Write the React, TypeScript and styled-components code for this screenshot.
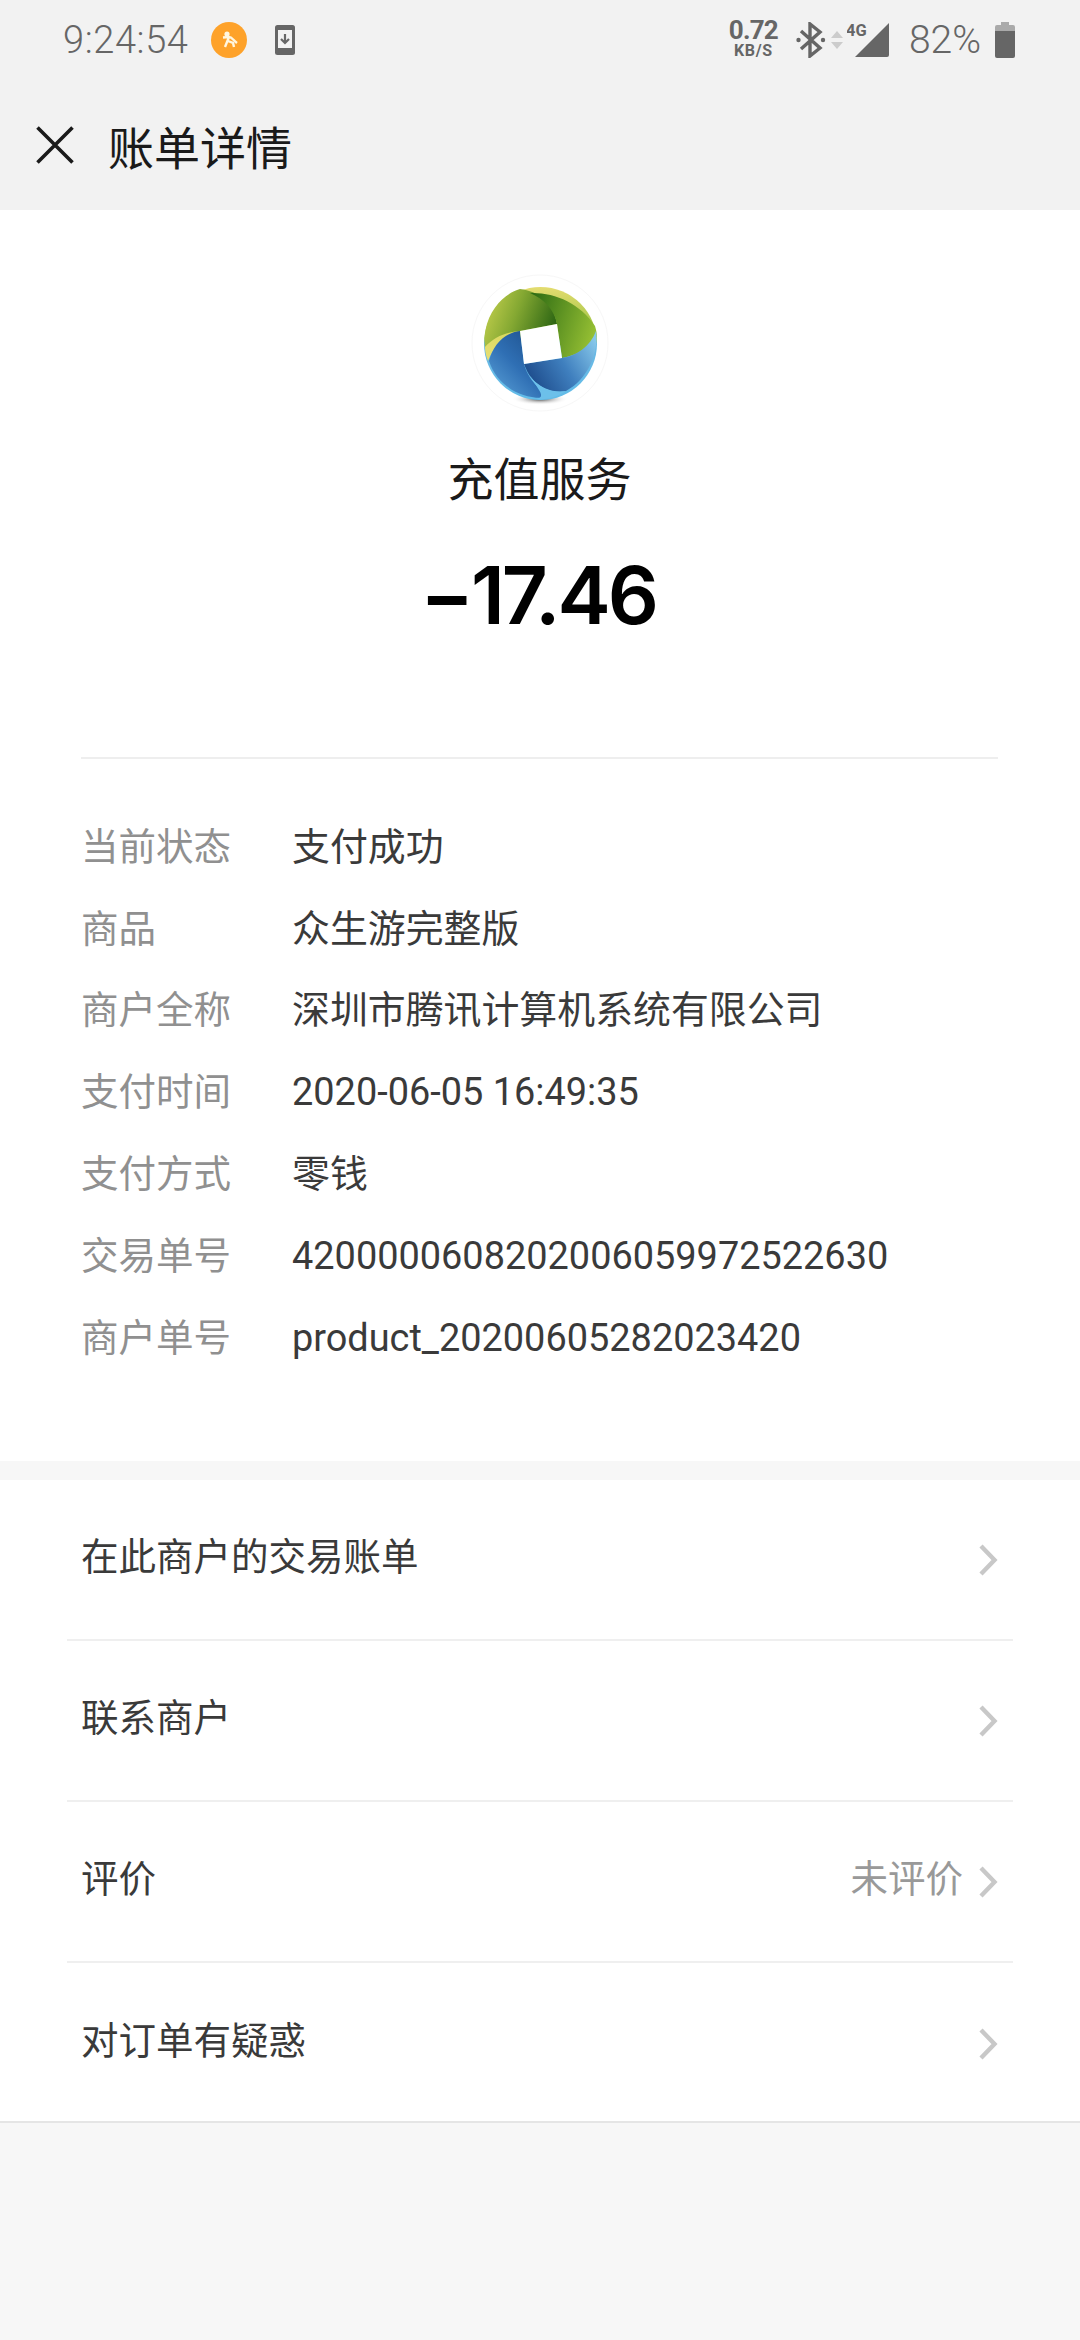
import React from "react";
import styled, { createGlobalStyle } from "styled-components";

const GlobalStyle = createGlobalStyle`
  html, body {
    margin: 0;
    padding: 0;
    background: #f7f7f7;
    font-family: Roboto, "Noto Sans CJK SC", sans-serif;
  }
`;

const Page = styled.div`
  width: 1080px;
  height: 2340px;
  display: flex;
  flex-direction: column;
  background: #f7f7f7;
  overflow: hidden;
`;

const Header = styled.header`
  height: 210px;
  flex: none;
  background: #f2f2f2;
  display: flex;
  flex-direction: column;
`;

const StatusBar = styled.div`
  height: 80px;
  display: flex;
  align-items: center;
  padding: 0 65px 0 63px;
  color: #666;
`;

const Clock = styled.span`
  font-size: 38px;
  font-weight: 300;
  letter-spacing: 0.6px;
  margin-right: 22px;
`;

const StatusLeft = styled.div`
  display: flex;
  align-items: center;
  flex: 1;
`;

const Speed = styled.div`
  display: flex;
  flex-direction: column;
  align-items: center;
  font-weight: 700;
  color: #666;
  margin-right: 18px;
  span:first-child {
    font-size: 26px;
    line-height: 22px;
    letter-spacing: -0.8px;
  }
  span:last-child {
    font-size: 16px;
    line-height: 20px;
    letter-spacing: 0.6px;
  }
`;

const BluetoothGap = styled.span`
  width: 5px;
  flex: none;
`;

const Percent = styled.span`
  font-size: 39px;
  font-weight: 300;
  margin: 0 14px 0 20px;
`;

const NavBar = styled.div`
  flex: 1;
  display: flex;
  align-items: center;
  padding: 0 0 0 36px;
  gap: 34px;
`;

const NavTitle = styled.h1`
  margin: 0;
  font-size: 46px;
  line-height: 60px;
  font-weight: 400;
  color: #1a1a1a;
  font-family: "Noto Sans CJK SC", sans-serif;
`;

const Summary = styled.section`
  background: #fff;
  flex: none;
  height: 1251px;
  display: flex;
  flex-direction: column;
  padding: 0 82px 0 81px;
  box-sizing: border-box;
`;

const Merchant = styled.div`
  height: 549px;
  flex: none;
  border-bottom: 2px solid #eeeeee;
  display: flex;
  flex-direction: column;
  align-items: center;
  box-sizing: border-box;
  padding-top: 63px;
`;

const MerchantName = styled.div`
  margin-top: 33px;
  font-size: 46px;
  line-height: 60px;
  color: #1a1a1a;
  font-family: "Noto Sans CJK SC", sans-serif;
`;

const Amount = styled.div`
  margin-top: 44px;
  margin-left: -3px;
  font-size: 80px;
  line-height: 90px;
  font-weight: 600;
  color: #000;
  font-family: Inter, Roboto, sans-serif;
  letter-spacing: -3px;
`;

const Details = styled.dl`
  margin: 44px 0 0;
  display: flex;
  flex-direction: column;
`;

const DetailRow = styled.div`
  height: 81.8px;
  display: flex;
  align-items: center;
`;

const DetailLabel = styled.dt`
  width: 211px;
  flex: none;
  font-size: 37.5px;
  line-height: 50px;
  color: #909090;
  font-family: "Noto Sans CJK SC", sans-serif;
`;

const DetailValue = styled.dd`
  margin: 0;
  padding-top: 6px;
  font-size: 37.9px;
  line-height: 50px;
  color: #3a3a3a;
  white-space: nowrap;
  font-family: Roboto, "Noto Sans CJK SC", sans-serif;
`;

const Actions = styled.section`
  margin-top: 19px;
  background: #fff;
  border-bottom: 2px solid #e5e5e5;
  padding: 0 67px;
  flex: none;
`;

const ActionRow = styled.div<{ $last?: boolean }>`
  height: ${(p) => (p.$last ? "158px" : "161px")};
  display: flex;
  align-items: center;
  box-sizing: border-box;
  padding: ${(p) => (p.$last ? "3px 15px 0 14px" : "0 15px 0 14px")};
  border-bottom: ${(p) => (p.$last ? "none" : "2px solid #efefef")};
`;

const ActionLabel = styled.span`
  flex: 1;
  font-size: 37.5px;
  color: #3a3a3a;
  margin-bottom: 12px;
  font-family: "Noto Sans CJK SC", sans-serif;
`;

const ActionNote = styled.span`
  font-size: 37.5px;
  color: #999;
  margin: 0 15px 12px 0;
  font-family: "Noto Sans CJK SC", sans-serif;
`;

const Chevron = () => (
  <svg width="20" height="32" viewBox="0 0 20 32" style={{ flex: "none" }}>
    <path d="M3 2 L16.5 16 L3 30" fill="none" stroke="#c8c8c8" strokeWidth="4.4" />
  </svg>
);

const CloseIcon = () => (
  <svg width="38" height="38" viewBox="0 0 38 38" style={{ flex: "none" }}>
    <path d="M1.5 1.5 L36.5 36.5 M36.5 1.5 L1.5 36.5" stroke="#1a1a1a" strokeWidth="3.6" fill="none" />
  </svg>
);

const RunnerBadge = () => (
  <svg width="36" height="36" viewBox="0 0 36 36" style={{ marginRight: 28, flex: "none" }}>
    <circle cx="18" cy="18" r="18" fill="#fea22a" />
    <circle cx="16" cy="12" r="2.6" fill="#fff6e0" />
    <path d="M12 15.5 L18 15 C21 15 22 18 26 21 M18 15 L14 25 M17 19 L22 21 L23 25" stroke="#fff6e0" strokeWidth="2.4" fill="none" />
  </svg>
);

const DownloadIcon = () => (
  <svg width="20" height="30" viewBox="0 0 20 30" style={{ flex: "none" }}>
    <rect width="20" height="30" rx="2.5" fill="#666" />
    <rect x="3" y="5" width="14" height="18" fill="#f2f2f2" />
    <path d="M10 9 V17 M6 14 L10 18 L14 14" stroke="#666" strokeWidth="2.2" fill="none" />
  </svg>
);

const BluetoothIcon = () => (
  <svg width="30" height="36" viewBox="0 0 30 36" style={{ flex: "none" }}>
    <path d="M5 9 L24 26 L14 34 V2 L24 10 L5 27" stroke="#666" strokeWidth="3.4" fill="none" />
    <circle cx="2.5" cy="18" r="2.2" fill="#666" />
    <circle cx="27" cy="18" r="2.2" fill="#666" />
  </svg>
);

const SignalIcon = () => (
  <svg width="42" height="36" viewBox="0 0 42 36" style={{ flex: "none" }}>
    <path d="M42 1 V33 Q42 35 40 35 H8 Z" fill="#666" />
    <text x="-1" y="14" fontSize="16.5" fontWeight="700" fill="#666" fontFamily="Roboto, sans-serif">4G</text>
  </svg>
);

const UpDownIcon = () => (
  <svg width="12" height="18" viewBox="0 0 12 18" style={{ flex: "none", marginRight: 4 }}>
    <path d="M6 0 L12 7 H0 Z M0 11 H12 L6 18 Z" fill="#ccc" />
  </svg>
);

const BatteryIcon = () => (
  <svg width="20" height="36" viewBox="0 0 20 36" style={{ flex: "none" }}>
    <path d="M6 0 H14 V3 H18 Q20 3 20 5 V9 H0 V5 Q0 3 2 3 H6 Z" fill="#aaa" />
    <path d="M0 9 H20 V34 Q20 36 18 36 H2 Q0 36 0 34 Z" fill="#666" />
  </svg>
);

const TencentLogo = () => (
  <svg width="140" height="140" viewBox="0 0 140 140" style={{ flex: "none" }}>
    <defs>
      <linearGradient id="base" x1="0" y1="0" x2="0" y2="1">
        <stop offset="0" stopColor="#e4dc70" />
        <stop offset="0.45" stopColor="#8fbf3a" />
        <stop offset="0.5" stopColor="#6ab8e4" />
        <stop offset="1" stopColor="#62bce8" />
      </linearGradient>
      <linearGradient id="leafLeft" x1="0" y1="0.4" x2="1" y2="0.7">
        <stop offset="0" stopColor="#bccb4a" />
        <stop offset="0.4" stopColor="#84a832" />
        <stop offset="1" stopColor="#245f10" />
      </linearGradient>
      <linearGradient id="leafRight" x1="0" y1="0.2" x2="1" y2="0.5">
        <stop offset="0" stopColor="#2f6d14" />
        <stop offset="1" stopColor="#95bf33" />
      </linearGradient>
      <linearGradient id="stripe" x1="0" y1="1" x2="1" y2="0">
        <stop offset="0" stopColor="#e9df74" />
        <stop offset="1" stopColor="#d3d658" />
      </linearGradient>
      <linearGradient id="waveLeft" x1="1" y1="0" x2="0" y2="1">
        <stop offset="0" stopColor="#17467f" />
        <stop offset="0.55" stopColor="#2f6fb4" />
        <stop offset="1" stopColor="#5fa6db" />
      </linearGradient>
      <linearGradient id="waveRight" x1="0" y1="0.7" x2="1" y2="0.2">
        <stop offset="0" stopColor="#1c4a8a" />
        <stop offset="0.5" stopColor="#3f7fbe" />
        <stop offset="1" stopColor="#86c7ea" />
      </linearGradient>
      <radialGradient id="shadow">
        <stop offset="0" stopColor="#3a3a3a" />
        <stop offset="1" stopColor="#fff" stopOpacity="0" />
      </radialGradient>
    </defs>
    <circle cx="70" cy="70" r="68" fill="#fff" stroke="#f7f7f7" strokeWidth="1" />
    <ellipse cx="70" cy="126" rx="28" ry="6" fill="url(#shadow)" />
    <circle cx="70.5" cy="70.5" r="56.5" fill="url(#base)" />
    {/* upper left blade */}
    <path d="M15.5 57 C20 34 36 20 50 16 C68 18 84 30 87 51 L50 58 C36 60 24 66 15 76 C14.5 70 14.5 63 15.5 57 Z" fill="url(#leafLeft)" />
    {/* yellow stripe under it */}
    <path d="M15 74 C24 64 36 59 50 58 C36 62 24 72 18 88 C16 83 15 78 15 74 Z" fill="url(#stripe)" />
    {/* upper right blade */}
    <path d="M60 20 C84 19 110 30 125 53 C126.5 58 127 61 126.5 64 C118 76 104 83 92 85 L87 51 C84 36 74 26 60 20 Z" fill="url(#leafRight)" />
    {/* lower right blade */}
    <path d="M54 91 L92 85 C106 83 120 74 126 58 C129 80 118 106 96 118 C78 122 60 110 54 91 Z" fill="url(#waveRight)" />
    {/* lower left blade */}
    <path d="M50 58 L54 91 C58 106 70 119 84 123 C58 130 28 116 19 88 C23 72 34 60 50 58 Z" fill="url(#waveLeft)" />
    {/* light blue rim */}
    <path d="M54 91 C60 110 78 121 96 118 C86 125 74 127 66 126 C80 124 62 112 54 91 Z" fill="#6cc0ea" />
    <path d="M50 58 L87 51 L92 85 L54 91 Z" fill="#fff" />
  </svg>
);

const details = [
  ["当前状态", "支付成功"],
  ["商品", "众生游完整版"],
  ["商户全称", "深圳市腾讯计算机系统有限公司"],
  ["支付时间", "2020-06-05 16:49:35"],
  ["支付方式", "零钱"],
  ["交易单号", "4200000608202006059972522630"],
  ["商户单号", "product_20200605282023420"],
];

const actions = [
  { label: "在此商户的交易账单" },
  { label: "联系商户" },
  { label: "评价", note: "未评价" },
  { label: "对订单有疑惑" },
];

export default function App() {
  return (
    <Page>
      <GlobalStyle />
      <Header>
        <StatusBar>
          <StatusLeft>
            <Clock>9:24:54</Clock>
            <RunnerBadge />
            <DownloadIcon />
          </StatusLeft>
          <Speed>
            <span>0.72</span>
            <span>KB/S</span>
          </Speed>
          <BluetoothIcon />
          <BluetoothGap />
          <UpDownIcon />
          <SignalIcon />
          <Percent>82%</Percent>
          <BatteryIcon />
        </StatusBar>
        <NavBar>
          <CloseIcon />
          <NavTitle>账单详情</NavTitle>
        </NavBar>
      </Header>
      <Summary>
        <Merchant>
          <TencentLogo />
          <MerchantName>充值服务</MerchantName>
          <Amount>−17.46</Amount>
        </Merchant>
        <Details>
          {details.map(([label, value]) => (
            <DetailRow key={label}>
              <DetailLabel>{label}</DetailLabel>
              <DetailValue>{value}</DetailValue>
            </DetailRow>
          ))}
        </Details>
      </Summary>
      <Actions>
        {actions.map((a, i) => (
          <ActionRow key={a.label} $last={i === actions.length - 1}>
            <ActionLabel>{a.label}</ActionLabel>
            {a.note && <ActionNote>{a.note}</ActionNote>}
            <Chevron />
          </ActionRow>
        ))}
      </Actions>
    </Page>
  );
}
